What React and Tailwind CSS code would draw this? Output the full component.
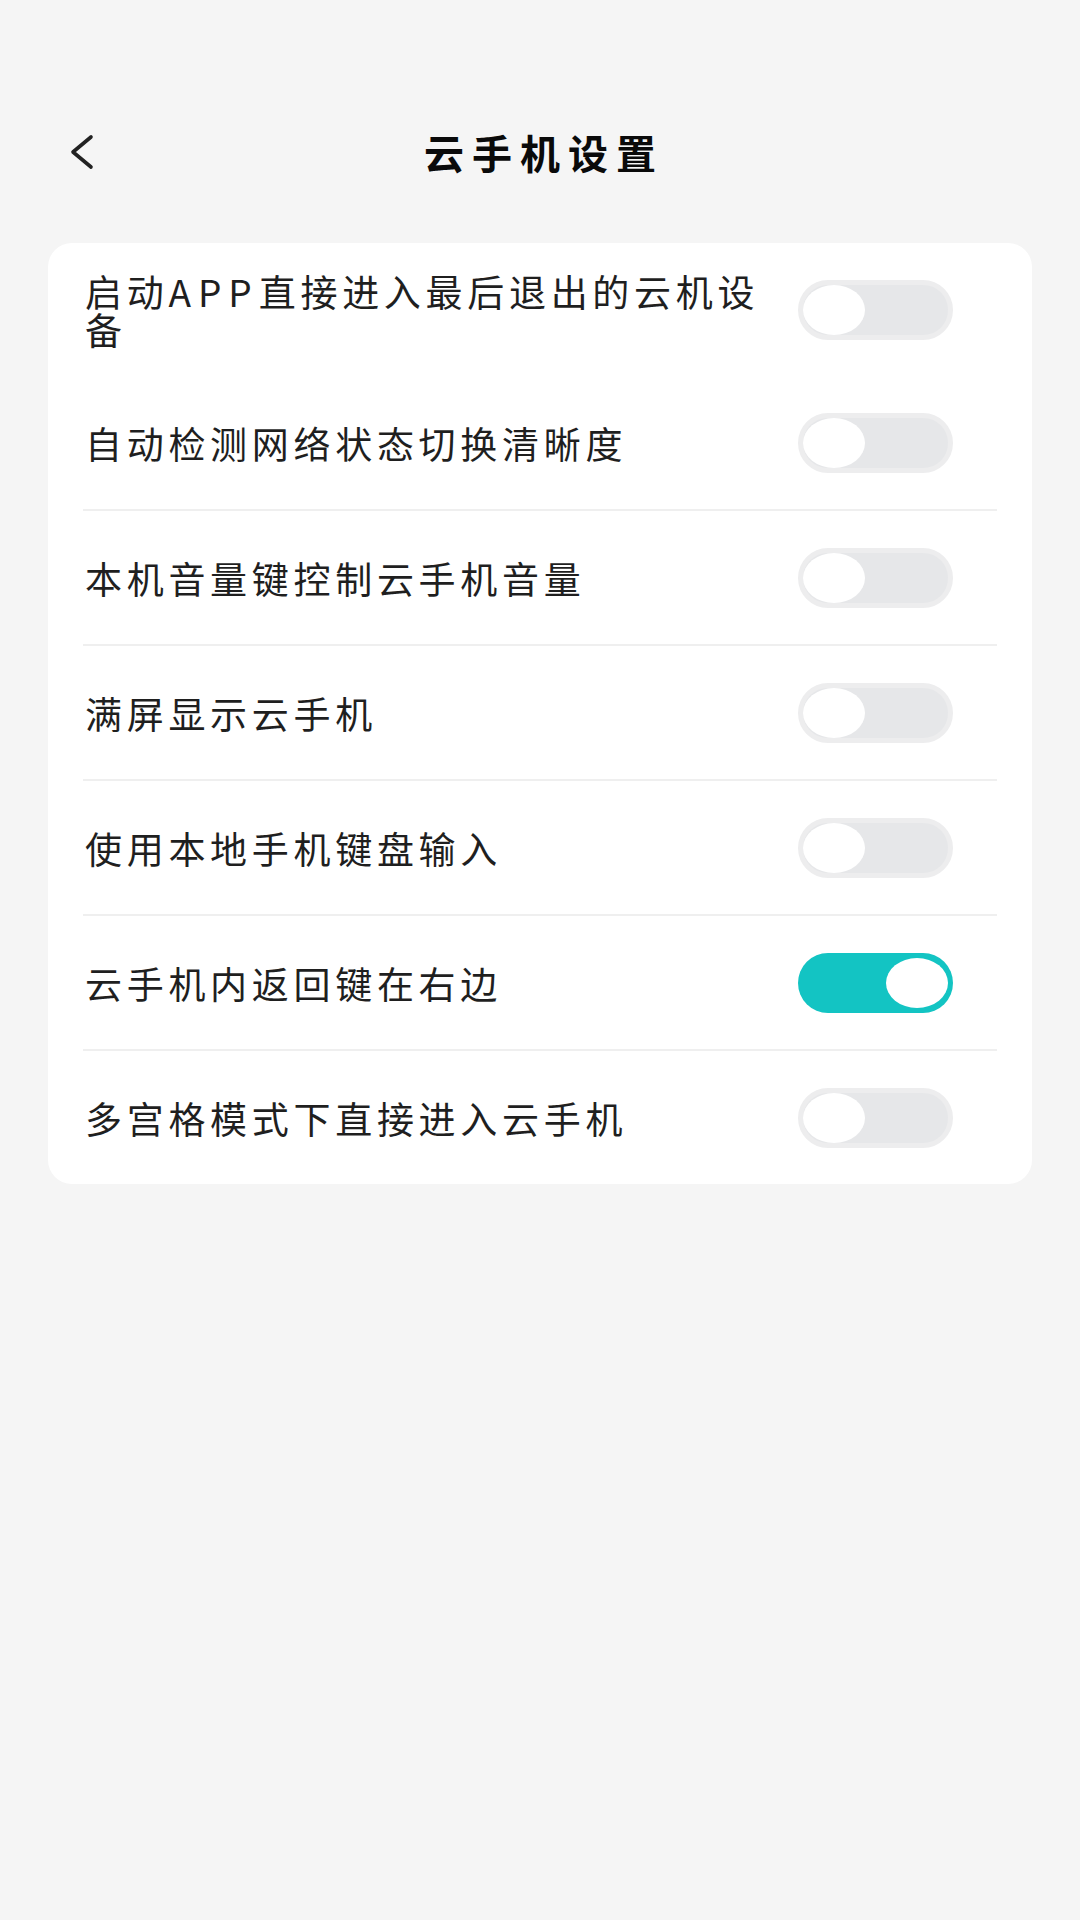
import React, { useState } from "react";

const items = [
  { id: "launch", label: null, on: false },
  { id: "net", label: "自动检测网络状态切换清晰度", on: false },
  { id: "vol", label: "本机音量键控制云手机音量", on: false },
  { id: "full", label: "满屏显示云手机", on: false },
  { id: "kbd", label: "使用本地手机键盘输入", on: false },
  { id: "back", label: "云手机内返回键在右边", on: true },
  { id: "grid", label: "多宫格模式下直接进入云手机", on: false },
];

function Toggle({ on, onClick }) {
  return (
    <button
      onClick={onClick}
      className={
        on
          ? "w-[155px] h-[60px] rounded-full bg-[#13c4c3] flex items-center justify-end pr-[5px] shrink-0"
          : "w-[155px] h-[60px] rounded-full bg-[#e6e7e9] border-[5px] border-[#ededee] flex items-center justify-start shrink-0"
      }
    >
      <span className="block w-[62px] h-[50px] rounded-[50%] bg-white" />
    </button>
  );
}

export default function App() {
  const [state, setState] = useState(items.map((i) => i.on));

  const flip = (idx) =>
    setState((s) => s.map((v, i) => (i === idx ? !v : v)));

  return (
    <div
      className="w-full min-h-screen bg-[#f5f5f5] pt-[102px] flow-root"
      style={{ fontFamily: "'Noto Sans CJK SC', 'Noto Sans', sans-serif" }}
    >
      {/* Header */}
      <div className="relative h-[100px] flex items-center justify-center">
        <button className="absolute left-[64px] top-[32px] w-[34px] h-[36px] flex items-center justify-center">
          <svg width="28" height="36" viewBox="0 0 28 36" fill="none">
            <path
              d="M24 3 L6 18 L24 33"
              stroke="#222"
              strokeWidth="3.6"
              strokeLinecap="round"
              strokeLinejoin="round"
            />
          </svg>
        </button>
        <h1 className="text-[40px] font-bold text-[#0a0a0a] tracking-[8px] pl-[8px] leading-none">
          云手机设置
        </h1>
      </div>

      {/* Settings card */}
      <div className="mx-[48px] mt-[41px] bg-white rounded-[24px]">
        {items.map((item, idx) => (
          <div key={item.id}>
            {idx > 1 && <div className="mx-[35px] h-[2px] bg-[#efefef]" />}
            <div className="h-[133px] flex items-center justify-between pl-[37px] pr-[79px]">
              <p className="text-[37px] leading-[38px] tracking-[4.7px] text-[#1f1f1f] whitespace-nowrap">
                {item.label ?? (
                  <>
                    启动<span className="tracking-[7px]">APP</span>直接进入最后退出的云机设
                    <br />
                    备
                  </>
                )}
              </p>
              <Toggle on={state[idx]} onClick={() => flip(idx)} />
            </div>
          </div>
        ))}
      </div>
    </div>
  );
}
